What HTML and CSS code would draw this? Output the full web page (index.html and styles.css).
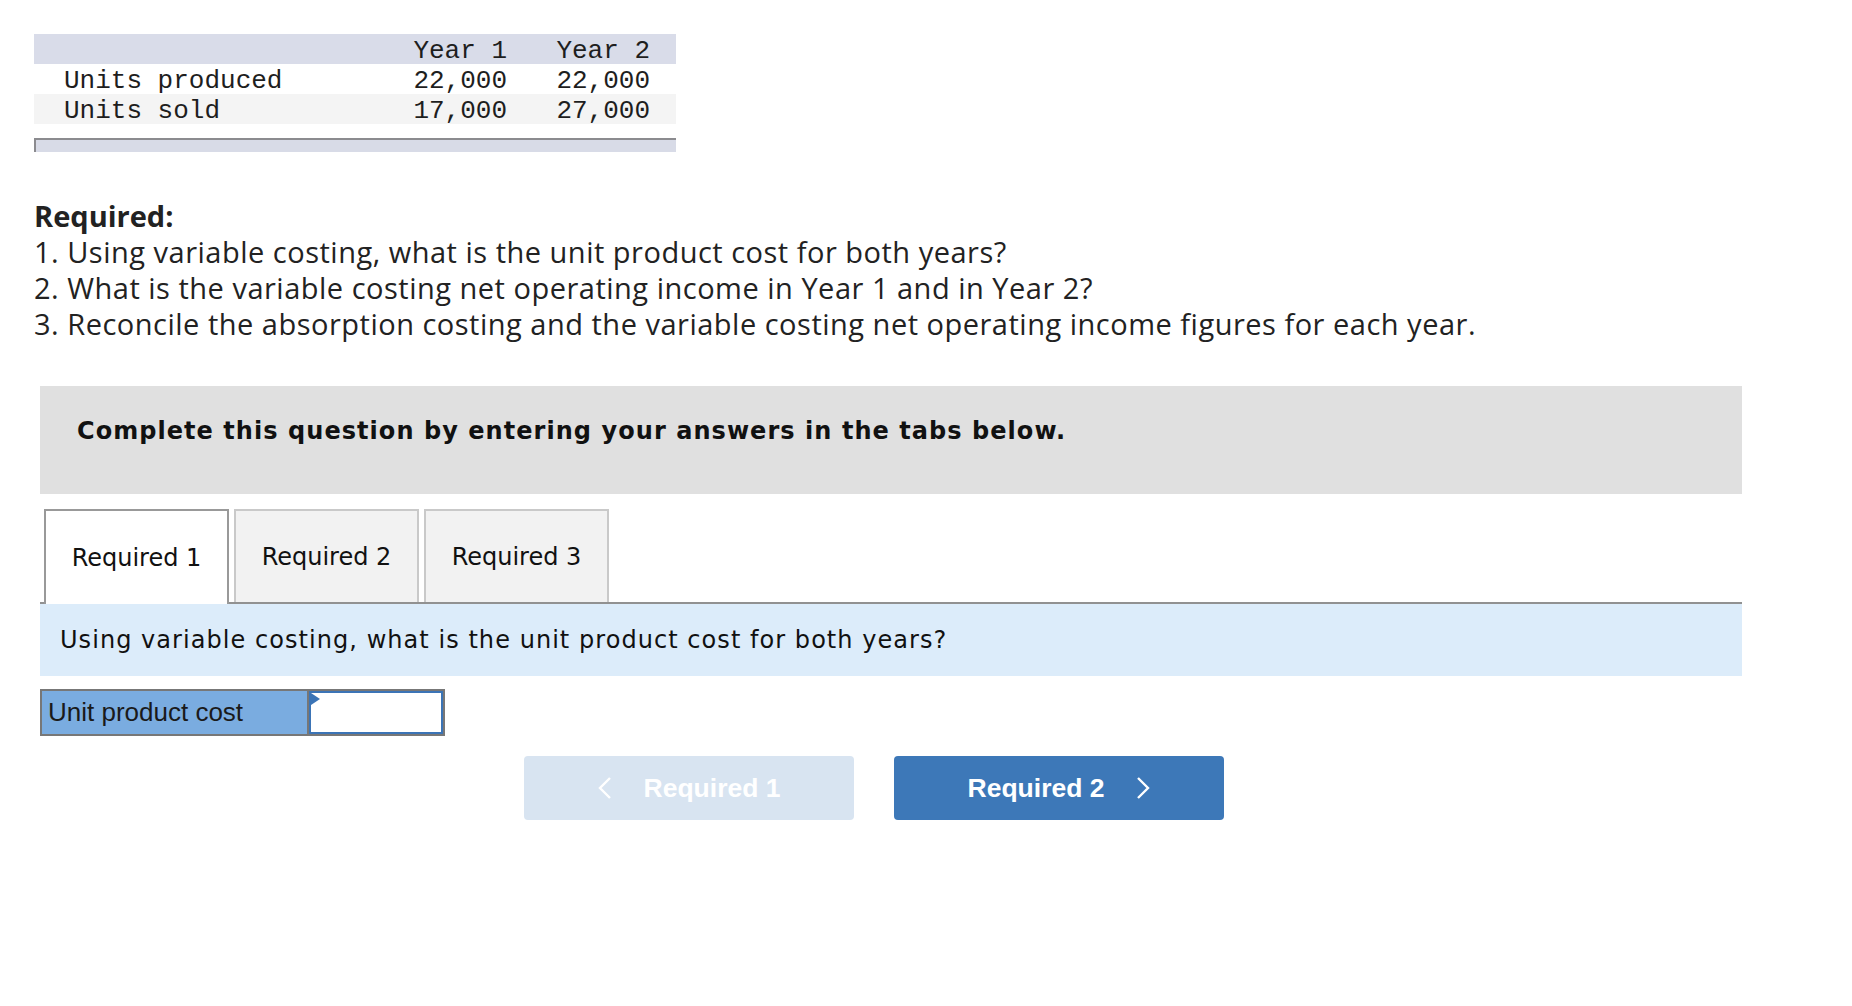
FILE: index.html
```html
<!DOCTYPE html>
<html lang="en">
<head>
<meta charset="utf-8">
<title>Variable costing</title>
<link rel="stylesheet" href="styles.css">
</head>
<body>
<div class="page">
  <div class="data-table">
    <div class="row head">
      <span class="label"></span><span class="num">Year 1</span><span class="num">Year 2</span><span></span>
    </div>
    <div class="row">
      <span class="label">Units produced</span><span class="num">22,000</span><span class="num">22,000</span><span></span>
    </div>
    <div class="row alt">
      <span class="label">Units sold</span><span class="num">17,000</span><span class="num">27,000</span><span></span>
    </div>
    <div class="scrollbar"></div>
  </div>

  <div class="required">
    <div class="req-title">Required:</div>
    <div class="req-item">1. Using variable costing, what is the unit product cost for both years?</div>
    <div class="req-item">2. What is the variable costing net operating income in Year 1 and in Year 2?</div>
    <div class="req-item">3. Reconcile the absorption costing and the variable costing net operating income figures for each year.</div>
  </div>

  <div class="instructions">Complete this question by entering your answers in the tabs below.</div>

  <div class="tabs">
    <div class="tab active">Required 1</div>
    <div class="tab">Required 2</div>
    <div class="tab">Required 3</div>
  </div>

  <div class="question">Using variable costing, what is the unit product cost for both years?</div>

  <div class="answer-row">
    <div class="answer-label">Unit product cost</div>
    <div class="answer-input"><span class="marker"></span></div>
  </div>

  <div class="nav">
    <div class="btn prev">
      <svg class="chev" width="14" height="22" viewBox="0 0 14 22"><path d="M12 1 L2 11 L12 21" fill="none" stroke="#fff" stroke-width="2.4"/></svg>
      <span>Required 1</span>
    </div>
    <div class="btn next">
      <span>Required 2</span>
      <svg class="chev" width="14" height="22" viewBox="0 0 14 22"><path d="M2 1 L12 11 L2 21" fill="none" stroke="#fff" stroke-width="2.4"/></svg>
    </div>
  </div>
</div>
</body>
</html>
```

FILE: styles.css
```css
* { box-sizing: border-box; }
html, body { margin: 0; padding: 0; background: #fff; }
.page { padding-top: 34px; width: 1852px; }

.data-table {
  margin-left: 34px;
  width: 642px;
  font-family: "Liberation Mono", "Courier New", monospace;
  font-size: 26px;
  color: #1e1e1e;
}
.row {
  display: grid;
  grid-template-columns: 353px 120px 143px 26px;
  height: 30px;
  padding-top: 5px;
  line-height: 25px;
  background: #fff;
}
.row.head { background: #d9dce9; }
.row.alt { background: #f4f4f4; }
.row .label { padding-left: 30px; white-space: pre; }
.row .num { text-align: right; }
.scrollbar {
  margin-top: 14px;
  height: 14px;
  background: #d8dbe7;
  border-top: 2px solid #8b8b8f;
  border-left: 2px solid #8b8b8f;
}

.required {
  margin-top: 46px;
  margin-left: 34px;
  font-family: "Open Sans", Lato, sans-serif;
  font-size: 29px;
  line-height: 36px;
  color: #222;
}
.req-title { font-weight: 700; }
.req-item { letter-spacing: 0.5px; }

.instructions {
  margin-top: 44px;
  margin-left: 40px;
  width: 1702px;
  height: 108px;
  background: #e0e0e0;
  padding: 30px 0 0 37px;
  font-family: "DejaVu Sans", Verdana, sans-serif;
  font-weight: 700;
  font-size: 24px;
  letter-spacing: 1.05px;
  line-height: 30px;
  color: #111;
}

.tabs {
  margin-top: 15px;
  margin-left: 40px;
  width: 1702px;
  padding-left: 4px;
  display: flex;
  gap: 5px;
  border-bottom: 2px solid #919191;
}
.tab {
  width: 185px;
  height: 93px;
  display: flex;
  align-items: center;
  justify-content: center;
  background: #f2f2f2;
  border: 2px solid #c9c9c9;
  border-bottom: none;
  font-family: "DejaVu Sans", Verdana, sans-serif;
  font-size: 24px;
  color: #111;
}
.tab.active {
  background: #fff;
  border-color: #999;
  height: 95px;
  margin-bottom: -2px;
}

.question {
  margin-left: 40px;
  width: 1702px;
  height: 72px;
  background: #dcecfa;
  padding-left: 20px;
  display: flex;
  align-items: center;
  font-family: "DejaVu Sans", Verdana, sans-serif;
  font-size: 24px;
  letter-spacing: 1.05px;
  color: #111;
}

.answer-row {
  margin-top: 13px;
  margin-left: 40px;
  display: flex;
  width: 405px;
  height: 47px;
  border: 2px solid #777;
}
.answer-label {
  width: 267px;
  background: #7aace0;
  border-right: 2px solid #777;
  padding-left: 6px;
  display: flex;
  align-items: center;
  font-family: "Liberation Sans", Arial, sans-serif;
  font-size: 26px;
  color: #1a1a1a;
}
.answer-input {
  flex: 1;
  position: relative;
  background: #fff;
  border: 2px solid #3b74b6;
}
.marker {
  position: absolute;
  left: 0;
  top: 0;
  width: 0;
  height: 0;
  border-top: 6px solid transparent;
  border-bottom: 6px solid transparent;
  border-left: 9px solid #3b74b6;
}

.nav {
  margin-top: 20px;
  margin-left: 524px;
  display: flex;
  gap: 40px;
}
.btn {
  width: 330px;
  height: 64px;
  border-radius: 4px;
  display: flex;
  align-items: center;
  justify-content: center;
  gap: 32px;
  font-family: "Liberation Sans", Arial, sans-serif;
  font-weight: 700;
  font-size: 26.5px;
  color: #fff;
}
.btn.prev { background: #d8e4f1; }
.btn.next { background: #3d78b8; }
.chev { display: block; }
```
